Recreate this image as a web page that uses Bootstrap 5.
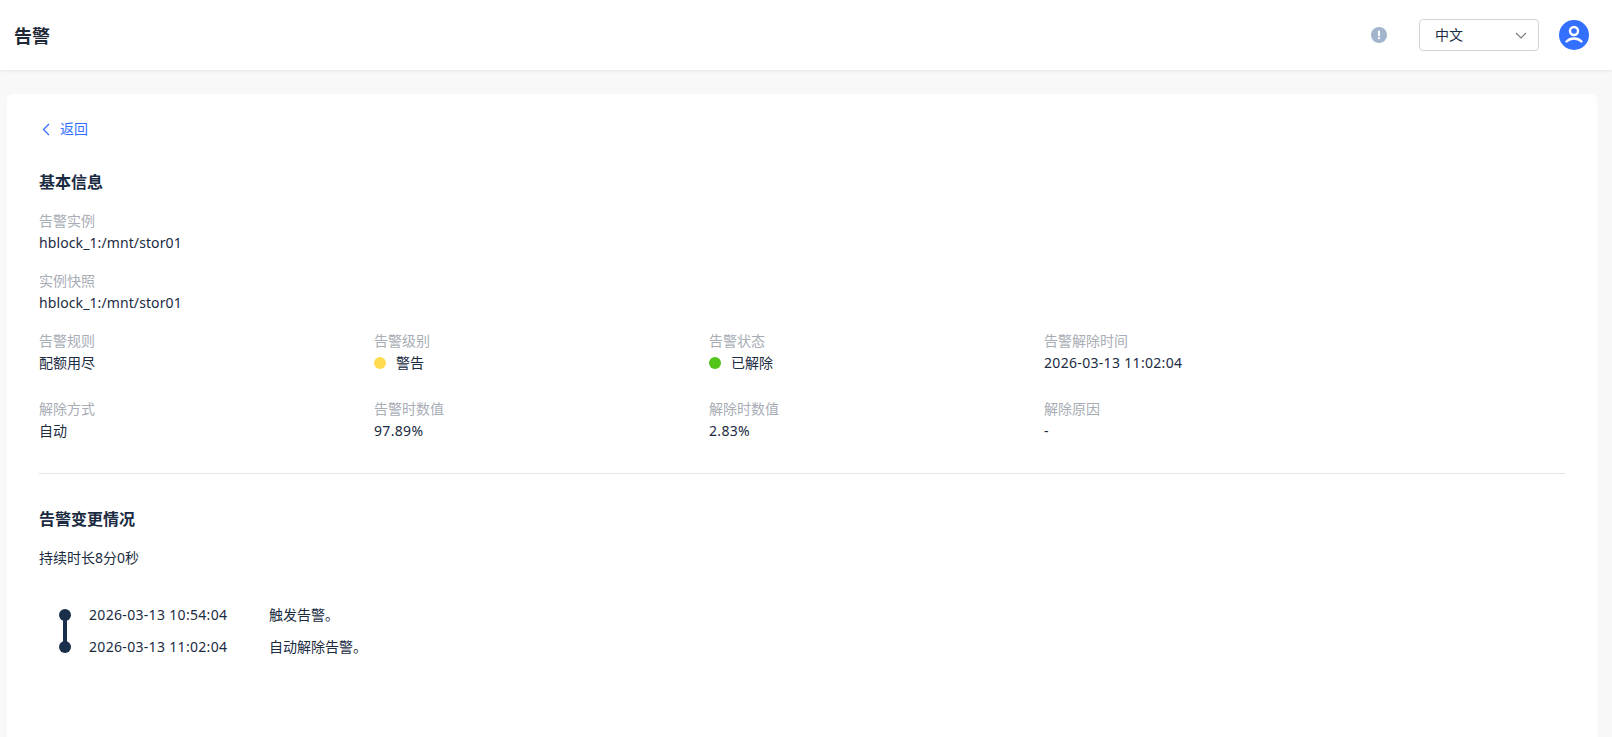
<!DOCTYPE html>
<html lang="zh-CN">
<head>
<meta charset="utf-8">
<title>告警</title>
<link href="https://cdn.jsdelivr.net/npm/bootstrap@5.3.0/dist/css/bootstrap.min.css" rel="stylesheet">
<style>
html,body{height:100%;}
body{background:#f8f8f8;font-family:"Noto Sans","Noto Sans CJK SC",sans-serif;font-size:14px;line-height:22px;color:#1a2b42;overflow:hidden;}
.top-bar{height:70px;background:#fff;box-shadow:0 1px 3px rgba(0,0,0,.08);padding:0 14px;}
.page-name{font-size:18px;font-weight:700;color:#1f2937;padding-top:1px;}
.info-ico{margin-right:32px;}
.lang-box{width:120px;height:32px;border:1px solid #d4d4d4;border-radius:4px;padding:0 11px 0 15px;color:#1a2b42;margin-right:20px;}
.user-ico{margin-right:9px;}
.sheet{margin:24px 15px 0 7px;background:#fff;border-radius:6px 6px 0 0;padding:24px 32px;height:643px;}
.back-link{color:#3370ff;text-decoration:none;height:22px;margin-bottom:30px;gap:10px;padding-left:3px;}
.sec-title{font-size:16px;font-weight:600;line-height:24px;margin-bottom:16px;color:#1a2b42;}
.f-label{color:#a8adb5;}
.f-block{margin-bottom:18px;height:42px;}
.f-val{letter-spacing:.1px;}
.f-num{letter-spacing:.32px;}
.f-grid{width:1340px;--bs-gutter-x:0;}
.f-cell{height:68px;}
.dot{width:12px;height:12px;border-radius:50%;margin-right:10px;flex:none;}
.dot-warn{background:#ffdc4f;}
.dot-ok{background:#52c41a;}
.rule{border-top:1px solid #e3e5e8;margin:7px 0 33px;}
.dur{margin:16px 0 30px;color:#1a2b42;}
.tl-row{height:32px;position:relative;padding-left:50px;}
.tl-time{width:180px;}
.tl-row .node{position:absolute;left:20px;top:10px;width:12px;height:12px;border-radius:50%;background:#1a2f4b;}
.tl-row.first::after{content:"";position:absolute;left:24px;top:16px;width:4px;height:32px;background:#1a2f4b;}
</style>
</head>
<body>
<header class="top-bar d-flex align-items-center justify-content-between">
  <div class="page-name">告警</div>
  <div class="d-flex align-items-center">
    <svg width="16" height="16" viewBox="0 0 16 16" class="info-ico"><circle cx="8" cy="8" r="8" fill="#a3b5cc"/><rect x="7" y="3.6" width="2" height="5.6" rx=".8" fill="#fff"/><circle cx="8" cy="11.2" r="1.1" fill="#fff"/></svg>
    <div class="lang-box d-flex align-items-center justify-content-between">
      <span>中文</span>
      <svg width="12" height="7" viewBox="0 0 12 7"><path d="M1 1l5 5 5-5" fill="none" stroke="#7a7a7a" stroke-width="1.1"/></svg>
    </div>
    <svg width="30" height="30" viewBox="0 0 30 30" class="user-ico"><circle cx="15" cy="15" r="15" fill="#3370ff"/><circle cx="15" cy="11" r="4" fill="none" stroke="#fff" stroke-width="2.4"/><path d="M7.5 21.5c2-2 4.600-3 7.500-3s5.500 1 7.500 3" fill="none" stroke="#fff" stroke-width="2.4" stroke-linecap="round"/></svg>
  </div>
</header>
<main class="sheet">
  <a href="#" class="back-link d-flex align-items-center">
    <svg width="8" height="13" viewBox="0 0 8 13"><path d="M7 1L1.500 6.500 7 12" fill="none" stroke="#3370ff" stroke-width="1.3"/></svg>
    <span>返回</span>
  </a>
  <div class="sec-title">基本信息</div>
  <div class="f-block"><div class="f-label">告警实例</div><div class="f-val">hblock_1:/mnt/stor01</div></div>
  <div class="f-block"><div class="f-label">实例快照</div><div class="f-val">hblock_1:/mnt/stor01</div></div>
  <div class="row f-grid">
    <div class="col-3 f-cell"><div class="f-label">告警规则</div><div>配额用尽</div></div>
    <div class="col-3 f-cell"><div class="f-label">告警级别</div><div class="d-flex align-items-center"><span class="dot dot-warn"></span>警告</div></div>
    <div class="col-3 f-cell"><div class="f-label">告警状态</div><div class="d-flex align-items-center"><span class="dot dot-ok"></span>已解除</div></div>
    <div class="col-3 f-cell"><div class="f-label">告警解除时间</div><div class="f-num">2026-03-13 11:02:04</div></div>
    <div class="col-3 f-cell"><div class="f-label">解除方式</div><div>自动</div></div>
    <div class="col-3 f-cell"><div class="f-label">告警时数值</div><div class="f-num">97.89%</div></div>
    <div class="col-3 f-cell"><div class="f-label">解除时数值</div><div class="f-num">2.83%</div></div>
    <div class="col-3 f-cell"><div class="f-label">解除原因</div><div>-</div></div>
  </div>
  <div class="rule"></div>
  <div class="sec-title mb-0">告警变更情况</div>
  <div class="dur">持续时长8分0秒</div>
  <div class="tl-row first d-flex align-items-center"><span class="node"></span><span class="tl-time f-num">2026-03-13 10:54:04</span><span>触发告警。</span></div>
  <div class="tl-row d-flex align-items-center"><span class="node"></span><span class="tl-time f-num">2026-03-13 11:02:04</span><span>自动解除告警。</span></div>
</main>
<script src="https://cdn.jsdelivr.net/npm/bootstrap@5.3.0/dist/js/bootstrap.bundle.min.js"></script>
</body>
</html>
